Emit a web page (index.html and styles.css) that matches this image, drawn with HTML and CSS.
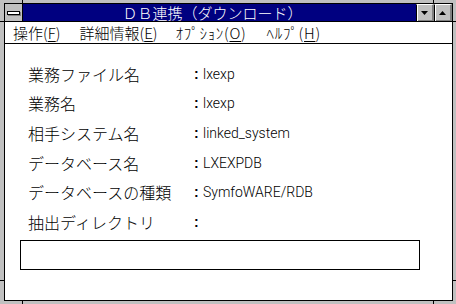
FILE: index.html
```html
<!DOCTYPE html>
<html lang="ja">
<head>
    <meta charset="UTF-8">
    <title>DB連携（ダウンロード）</title>
    <link rel="stylesheet" href="styles.css">
</head>
<body>
    <div class="window">
        <div class="inner">
            <div class="titlebar">
                <div class="sysmenu"><span class="sysbar"></span></div>
                <div class="caption">ＤＢ連携（ダウンロード）</div>
                <div class="capbtn">
                    <svg width="9" height="5" viewBox="0 0 9 5"><polygon points="1,0 8,0 4.5,4" fill="#000"/></svg>
                </div>
                <div class="capbtn">
                    <svg width="9" height="5" viewBox="0 0 9 5"><polygon points="4.5,0 8,4 1,4" fill="#000"/></svg>
                </div>
            </div>
            <div class="menubar">
                <span class="menu m1">操作(<u>F</u>)</span>
                <span class="menu m2">詳細情報(<u>E</u>)</span>
                <span class="menu m3">ｵﾌﾟｼｮﾝ(<u>O</u>)</span>
                <span class="menu m4">ﾍﾙﾌﾟ(<u>H</u>)</span>
            </div>
            <div class="client">
                <div class="fields">
                    <span class="label">業務ファイル名</span><span class="colon">:</span><span class="value">lxexp</span>
                    <span class="label">業務名</span><span class="colon">:</span><span class="value">lxexp</span>
                    <span class="label">相手システム名</span><span class="colon">:</span><span class="value">linked_system</span>
                    <span class="label">データベース名</span><span class="colon">:</span><span class="value">LXEXPDB</span>
                    <span class="label">データベースの種類</span><span class="colon">:</span><span class="value">SymfoWARE/RDB</span>
                    <span class="label">抽出ディレクトリ</span><span class="colon">:</span><span class="value"></span>
                </div>
                <div class="dirbox"></div>
            </div>
        </div>
    </div>
</body>
</html>
```

FILE: styles.css
```css
body {
    margin: 0;
    background-color: #c0c0c0;
    font-family: "Noto Sans CJK JP", sans-serif;
}
.window {
    width: 456px;
    height: 304px;
    box-sizing: border-box;
    padding: 3px 3px 3px 4px;
    background:
        linear-gradient(#000, #000) 22px 0 / 1px 3px no-repeat,
        linear-gradient(#000, #000) 433px 0 / 1px 3px no-repeat,
        linear-gradient(#000, #000) 22px 100% / 1px 3px no-repeat,
        linear-gradient(#000, #000) 433px 100% / 1px 3px no-repeat,
        linear-gradient(#000, #000) 0 21px / 4px 1px no-repeat,
        linear-gradient(#000, #000) 0 280px / 4px 1px no-repeat,
        linear-gradient(#000, #000) 100% 21px / 3px 1px no-repeat,
        linear-gradient(#000, #000) 100% 280px / 3px 1px no-repeat,
        #c0c0c0;
}
.inner {
    height: 100%;
    box-sizing: border-box;
    border: 1px solid #000;
    background-color: white;
    display: flex;
    flex-direction: column;
}
.titlebar {
    display: flex;
    height: 17px;
    border-bottom: 1px solid #000;
    background-color: #000080;
}
.sysmenu {
    width: 17px;
    border-right: 1px solid #000;
    background-color: #c0c0c0;
    display: flex;
    justify-content: center;
    align-items: center;
}
.sysbar {
    width: 11px;
    height: 2px;
    border: 1px solid #000;
    background-color: white;
    box-shadow: 1px 1px 0 #808080;
}
.caption {
    flex: 1;
    color: white;
    font-size: 15px;
    font-weight: 300;
    line-height: 17px;
    text-align: center;
    padding-right: 14px;
    white-space: nowrap;
}
.capbtn {
    width: 15px;
    border-left: 1px solid #000;
    border-top: 1px solid white;
    border-right: 2px solid #808080;
    box-sizing: content-box;
    height: 16px;
    background-color: #c0c0c0;
    display: flex;
    justify-content: center;
    align-items: center;
    box-shadow: inset 1px 0 0 white, inset 0 -1px 0 #808080;
}
.menubar {
    height: 21px;
    border-bottom: 1px solid #000;
    display: flex;
    align-items: center;
    font-size: 15px;
    font-weight: 300;
    line-height: 21px;
    color: #000;
}
.menu {
    white-space: nowrap;
}
.m1 { margin-left: 8px; }
.m2 { margin-left: 19px; }
.m3 { margin-left: 18px; letter-spacing: 0.7px; }
.m4 { margin-left: 20px; letter-spacing: 0.7px; }
.menu u {
    text-underline-offset: 2px;
}
.client {
    flex: 1;
    padding: 15px 0 0 15px;
}
.fields {
    display: grid;
    grid-template-columns: 174px 9px auto;
    grid-auto-rows: 29.6px;
    align-items: center;
}
.label {
    font-size: 16px;
    font-weight: 300;
    padding-left: 8px;
    white-space: nowrap;
}
.colon {
    font-family: "Liberation Sans", sans-serif;
    font-weight: bold;
    font-size: 14px;
}
.value {
    font-family: Roboto, sans-serif;
    font-weight: 300;
    font-size: 14px;
}
.dirbox {
    width: 398px;
    height: 28px;
    border: 1px solid #000;
    margin-top: 3px;
}
```
